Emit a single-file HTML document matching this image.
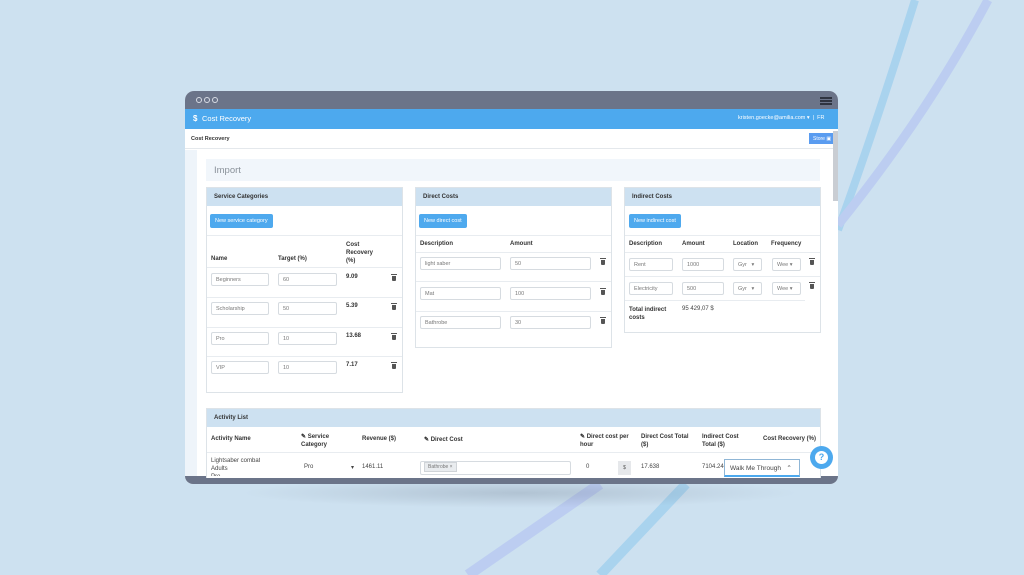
<!DOCTYPE html>
<html><head><meta charset="utf-8"><style>
*{margin:0;padding:0;box-sizing:border-box}
body{width:1024px;height:575px;overflow:hidden;background:#cde1f0;font-family:"Liberation Sans",sans-serif;position:relative;color:#333}
.a{position:absolute}
.t{position:absolute;font-size:6px;color:#444;white-space:nowrap}
.b{font-weight:bold;color:#333}
.in{position:absolute;border:1px solid #d6dbe0;border-radius:2px;background:#fff;font-size:5.5px;color:#777;padding:3px 4px;height:13px;line-height:6px}
.hl{position:absolute;height:1px;background:#e8ecf0}
.pan{position:absolute;border:1px solid #dde3e8;background:#fff}
.ph{position:absolute;left:0;right:0;top:0;height:18px;background:#cde1f1;font-size:6px;font-weight:bold;color:#333;padding:6px 7px}
.btn{position:absolute;background:#4ea9ee;color:#fff;font-size:5.5px;border-radius:2px;padding:4px 5px;height:14px}
.tr{position:absolute;width:4px;height:5px;background:#555;border-radius:0 0 1px 1px}
.tr:before{content:"";position:absolute;left:-1px;top:-2px;width:6px;height:1px;background:#555}
</style></head><body>
<svg class="a" style="left:0;top:0" width="1024" height="575">
<path d="M915 0 C890 80 860 170 838 230" stroke="#a9d3ee" stroke-width="8" fill="none"/>
<path d="M988 0 C940 90 890 160 838 225" stroke="#bccdf1" stroke-width="9" fill="none"/>
<path d="M600 484 L468 575" stroke="#bccdf1" stroke-width="11" fill="none"/>
<path d="M686 484 L600 575" stroke="#a9d3ee" stroke-width="10" fill="none"/>
</svg>
<div class="a" style="left:240px;top:478px;width:560px;height:30px;background:radial-gradient(ellipse at center,rgba(80,90,110,.22),rgba(80,90,110,0) 70%)"></div>
<div class="a" style="left:185px;top:91px;width:653px;height:393px;background:#fff;border-radius:9px 9px 8px 8px;overflow:hidden">
 <div class="a" style="left:0;top:0;width:653px;height:18px;background:#6b7489"></div>
 <div class="a" style="left:11px;top:6px;width:6px;height:6px;border:1.3px solid #d8dce4;border-radius:50%"></div>
 <div class="a" style="left:19px;top:6px;width:6px;height:6px;border:1.3px solid #d8dce4;border-radius:50%"></div>
 <div class="a" style="left:27px;top:6px;width:6px;height:6px;border:1.3px solid #d8dce4;border-radius:50%"></div>
 <div class="a" style="left:635px;top:6px;width:12px;height:1.5px;background:#2f3440;box-shadow:0 3px 0 #2f3440,0 6px 0 #2f3440"></div>
 <div class="a" style="left:0;top:18px;width:653px;height:20px;background:#4da9ee"></div>
 <div class="t" style="left:8px;top:23px;font-size:8px;color:#fff;font-weight:bold">$</div>
 <div class="t" style="left:17px;top:23px;font-size:7.5px;color:#fff">Cost Recovery</div>
 <div class="t" style="left:553px;top:24px;font-size:5.5px;color:#fff">kristen.goecke@amilia.com ▾ &nbsp;| &nbsp;FR</div>
 <div class="a" style="left:0;top:38px;width:653px;height:20px;background:#fff;border-bottom:1px solid #e4e8ec"></div>
 <div class="t b" style="left:6px;top:45px;font-size:5.5px">Cost Recovery</div>
 <div class="a" style="left:624px;top:42px;width:27px;height:11px;background:#5a9cf0;color:#fff;font-size:5px;padding:3px 4px">Store ▣</div>
 <div class="a" style="left:648px;top:40px;width:5px;height:70px;background:#c9cdd3"></div>
 <div class="a" style="left:0;top:59px;width:12px;height:326px;background:#eef4fa"></div>
 <div class="a" style="left:0;top:385px;width:653px;height:8px;background:#6b7489"></div>
</div>
<div class="a" style="left:206px;top:159px;width:614px;height:22px;background:#f1f6fb"></div>
<div class="t" style="left:214px;top:165px;font-size:9.5px;color:#8a929a">Import</div>

<div class="pan" style="left:206px;top:187px;width:197px;height:206px">
 <div class="ph">Service Categories</div>
 <div class="btn" style="left:3px;top:26px">New service category</div>
</div>
<div class="hl" style="left:207px;top:235px;width:195px"></div>
<div class="t b" style="left:211px;top:256px">Name</div>
<div class="t b" style="left:278px;top:256px">Target (%)</div>
<div class="t b" style="left:346px;top:241px;line-height:8px">Cost<br>Recovery<br>(%)</div>
<div class="hl" style="left:207px;top:267px;width:195px"></div>
<div class="in" style="left:211px;top:273px;width:58px">Beginners</div><div class="in" style="left:278px;top:273px;width:59px">60</div><div class="t b" style="left:346px;top:274px">9.09</div><div class="tr" style="left:392px;top:276px"></div>
<div class="hl" style="left:207px;top:297px;width:195px"></div>
<div class="in" style="left:211px;top:302px;width:58px">Scholarship</div><div class="in" style="left:278px;top:302px;width:59px">50</div><div class="t b" style="left:346px;top:303px">5.39</div><div class="tr" style="left:392px;top:305px"></div>
<div class="hl" style="left:207px;top:327px;width:195px"></div>
<div class="in" style="left:211px;top:332px;width:58px">Pro</div><div class="in" style="left:278px;top:332px;width:59px">10</div><div class="t b" style="left:346px;top:333px">13.68</div><div class="tr" style="left:392px;top:335px"></div>
<div class="hl" style="left:207px;top:356px;width:195px"></div>
<div class="in" style="left:211px;top:361px;width:58px">VIP</div><div class="in" style="left:278px;top:361px;width:59px">10</div><div class="t b" style="left:346px;top:362px">7.17</div><div class="tr" style="left:392px;top:364px"></div>

<div class="pan" style="left:415px;top:187px;width:197px;height:161px">
 <div class="ph">Direct Costs</div>
 <div class="btn" style="left:3px;top:26px">New direct cost</div>
</div>
<div class="hl" style="left:416px;top:235px;width:195px"></div>
<div class="t b" style="left:420px;top:241px">Description</div>
<div class="t b" style="left:510px;top:241px">Amount</div>
<div class="hl" style="left:416px;top:252px;width:195px"></div>
<div class="in" style="left:420px;top:257px;width:81px">light saber</div><div class="in" style="left:510px;top:257px;width:81px">50</div><div class="tr" style="left:601px;top:260px"></div>
<div class="hl" style="left:416px;top:281px;width:195px"></div>
<div class="in" style="left:420px;top:287px;width:81px">Mat</div><div class="in" style="left:510px;top:287px;width:81px">100</div><div class="tr" style="left:601px;top:290px"></div>
<div class="hl" style="left:416px;top:311px;width:195px"></div>
<div class="in" style="left:420px;top:316px;width:81px">Bathrobe</div><div class="in" style="left:510px;top:316px;width:81px">30</div><div class="tr" style="left:601px;top:319px"></div>

<div class="pan" style="left:624px;top:187px;width:197px;height:146px">
 <div class="ph">Indirect Costs</div>
 <div class="btn" style="left:4px;top:26px">New indirect cost</div>
</div>
<div class="hl" style="left:625px;top:235px;width:195px"></div>
<div class="t b" style="left:629px;top:241px">Description</div>
<div class="t b" style="left:682px;top:241px">Amount</div>
<div class="t b" style="left:733px;top:241px">Location</div>
<div class="t b" style="left:771px;top:241px">Frequency</div>
<div class="hl" style="left:625px;top:252px;width:195px"></div>
<div class="in" style="left:629px;top:258px;width:44px">Rent</div><div class="in" style="left:682px;top:258px;width:42px">1000</div><div class="in" style="left:733px;top:258px;width:29px">Gyr&nbsp;&nbsp; ▾</div><div class="in" style="left:772px;top:258px;width:29px">Wee ▾</div><div class="tr" style="left:810px;top:260px"></div>
<div class="hl" style="left:625px;top:276px;width:195px"></div>
<div class="in" style="left:629px;top:282px;width:44px">Electricity</div><div class="in" style="left:682px;top:282px;width:42px">500</div><div class="in" style="left:733px;top:282px;width:29px">Gyr&nbsp;&nbsp; ▾</div><div class="in" style="left:772px;top:282px;width:29px">Wee ▾</div><div class="tr" style="left:810px;top:284px"></div>
<div class="hl" style="left:625px;top:300px;width:180px"></div>
<div class="t b" style="left:629px;top:306px;line-height:8px">Total indirect<br>costs</div>
<div class="t" style="left:682px;top:306px">95 429,07 $</div>

<div class="pan" style="left:206px;top:408px;width:615px;height:70px;border-bottom:none">
 <div class="ph">Activity List</div>
</div>
<div class="t b" style="left:211px;top:436px">Activity Name</div>
<div class="t b" style="left:301px;top:433px;line-height:8px">✎ Service<br>Category</div>
<div class="t b" style="left:362px;top:436px">Revenue ($)</div>
<div class="t b" style="left:424px;top:436px">✎ Direct Cost</div>
<div class="t b" style="left:580px;top:433px;line-height:8px">✎ Direct cost per<br>hour</div>
<div class="t b" style="left:641px;top:433px;line-height:8px">Direct Cost Total<br>($)</div>
<div class="t b" style="left:702px;top:433px;line-height:8px">Indirect Cost<br>Total ($)</div>
<div class="t b" style="left:763px;top:436px">Cost Recovery (%)</div>
<div class="hl" style="left:207px;top:452px;width:613px"></div>
<div class="t" style="left:211px;top:457px;line-height:8px;height:19px;overflow:hidden">Lightsaber combat<br>Adults<br>Pro</div>
<div class="t" style="left:304px;top:464px">Pro</div>
<div class="t" style="left:351px;top:464px">▾</div>
<div class="t" style="left:362px;top:464px">1461.11</div>
<div class="in" style="left:420px;top:461px;width:151px;height:14px;padding:2px 3px"><span style="background:#e9ecef;border:1px solid #d0d4d8;padding:1px 3px;font-size:5px">Bathrobe ×</span></div>
<div class="t" style="left:586px;top:464px">0</div>
<div class="a" style="left:618px;top:461px;width:13px;height:14px;background:#e6e8eb;font-size:5px;color:#555;text-align:center;line-height:14px">$</div>
<div class="t" style="left:641px;top:464px">17.638</div>
<div class="t" style="left:702px;top:464px">7104.24€</div>
<div class="a" style="left:724px;top:459px;width:76px;height:18px;background:#fff;border:1px solid #8fb6d6;border-bottom:2px solid #4da9ee;font-size:6.5px;color:#444;padding:4px 5px">Walk Me Through &nbsp;&nbsp;⌃</div>
<div class="a" style="left:810px;top:446px;width:23px;height:23px;border-radius:50%;background:#4da9ee"></div>
<div class="a" style="left:815px;top:451px;width:13px;height:13px;border-radius:50%;background:#fff;color:#4da9ee;font-size:9px;font-weight:bold;text-align:center;line-height:13px">?</div>
</body></html>
